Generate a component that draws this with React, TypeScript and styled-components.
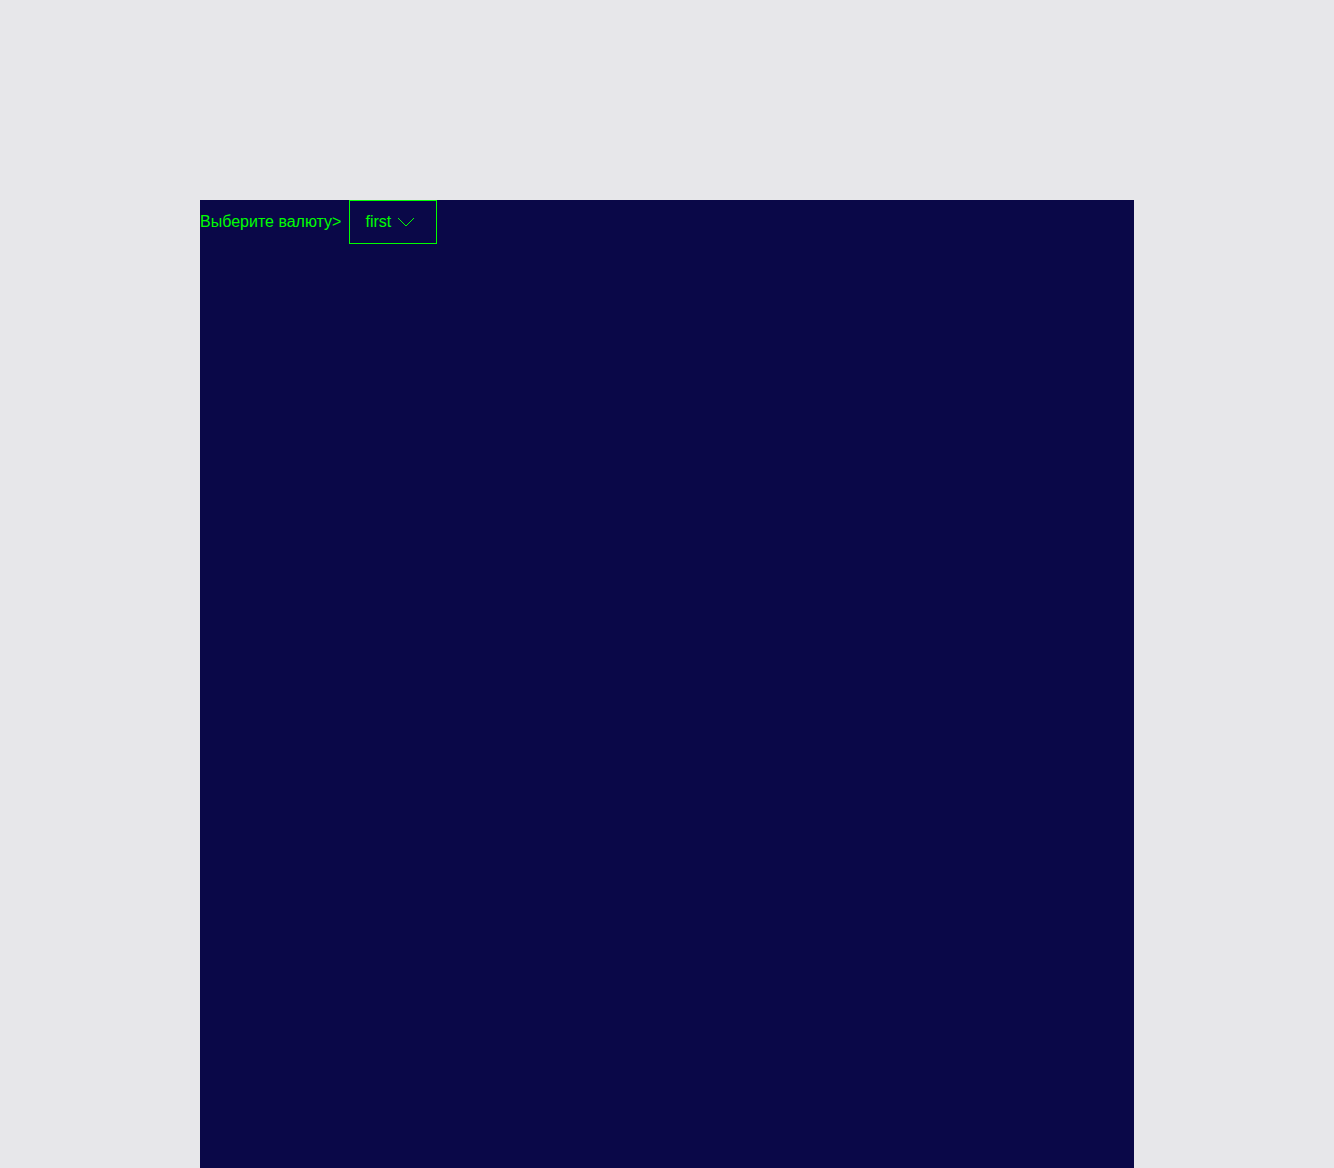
import React from "react";
import styled, { createGlobalStyle } from "styled-components";

const GlobalStyle = createGlobalStyle`
  html, body {
    margin: 0;
    padding: 0;
    background: #e7e7ea;
    font-family: "Liberation Sans", Arial, sans-serif;
  }
`;

const Panel = styled.main`
  width: 934px;
  height: 1000px;
  margin: 200px auto 0;
  background: #0a0848;
  color: #00ff00;
`;

const Toolbar = styled.div`
  display: flex;
  align-items: center;
  gap: 8px;
  font-size: 16px;
`;

const Label = styled.span`
  color: #00ff00;
`;

const SelectBox = styled.div`
  box-sizing: border-box;
  height: 44px;
  width: 88px;
  display: flex;
  align-items: center;
  gap: 6px;
  padding: 0 0 0 15px;
  border: 1px solid #00ff00;
  color: #00ff00;
  cursor: pointer;
`;

const Chevron = () => (
  <svg width="18" height="10" viewBox="0 0 18 10" fill="none">
    <polyline points="1,1 9,9 17,1" stroke="#00ff00" strokeWidth="1" />
  </svg>
);

export default function App() {
  return (
    <>
      <GlobalStyle />
      <Panel>
        <Toolbar>
          <Label>Выберите валюту&gt;</Label>
          <SelectBox>
            <span>first</span>
            <Chevron />
          </SelectBox>
        </Toolbar>
      </Panel>
    </>
  );
}
